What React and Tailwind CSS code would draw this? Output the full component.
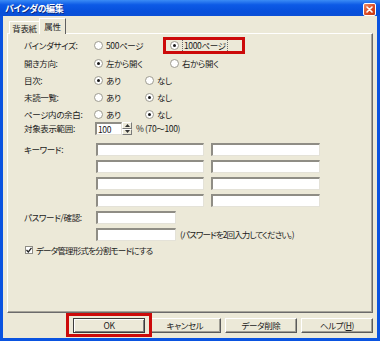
import React from 'react';

const Radio = ({ checked }) => (
  <span className="relative inline-block w-[9px] h-[9px] rounded-full border border-[#9d9b90] bg-white shrink-0">
    {checked && <span className="absolute left-[2px] top-[2px] w-[3px] h-[3px] rounded-full bg-[#1a1a1a]" />}
  </span>
);

const Option = ({ checked, w, children }) => (
  <div className={`flex items-center gap-[3px] ${w}`}>
    <Radio checked={checked} />
    <span>{children}</span>
  </div>
);

const Field = ({ w, children }) => (
  <div className={`h-[13px] bg-white border-t-2 border-l-2 border-r border-b border-t-[#8f8d85] border-l-[#8f8d85] border-r-[#e4e2d8] border-b-[#e4e2d8] flex items-center pl-[1px] ${w}`}>
    {children}
  </div>
);

const RadioRow = ({ label, h, w, a, b, sel }) => (
  <div className={`flex items-center ${h}`}>
    <span className="w-[70px] shrink-0">{label}</span>
    <Option checked={sel === 0} w={w}>{a}</Option>
    <Option checked={sel === 1} w="">{b}</Option>
  </div>
);

const Btn = ({ children, def }) => (
  <div
    className={`w-[72px] h-[15px] flex items-center justify-center bg-[#ece9d8] border ${
      def
        ? 'border-[#3c3c3c] shadow-[inset_1px_1px_0_#ffffff,inset_-1px_-1px_0_#808080]'
        : 'border-t-white border-l-white border-r-[#5a5a5a] border-b-[#5a5a5a] shadow-[inset_-1px_-1px_0_#a09e94]'
    }`}
  >
    {children}
  </div>
);

export default function App() {
  return (
    <div className="relative w-[380px] h-[341px] bg-[#0a53e0] px-[3px] pb-[3px] flex flex-col text-[8.5px] tracking-[-0.35px] leading-none text-[#1b1b1b] font-['Noto_Sans_CJK_JP',sans-serif] [font-feature-settings:'palt'] overflow-hidden">
      {/* title bar */}
      <div className="h-[16px] -mx-[3px] px-[5px] flex items-center justify-between bg-[linear-gradient(#3b8cf5,#0d5ae6_30%,#0750dc_70%,#0a4fd6)]">
        <span className="text-white font-bold text-[9px] [text-shadow:1px_1px_0_#0a2a80]">バインダの編集</span>
        <div className="w-[13px] h-[13px] mt-[3px] mr-[-1px] rounded-[2px] border border-white bg-[linear-gradient(135deg,#ee8c66,#d9451e_60%,#c53a12)] flex items-center justify-center">
          <svg width="7" height="7" viewBox="0 0 7 7">
            <path d="M1 1L6 6M6 1L1 6" stroke="white" strokeWidth="1.6" strokeLinecap="round" />
          </svg>
        </div>
      </div>

      {/* body */}
      <div className="flex-1 bg-[#ece9d8] flex flex-col px-[4px]">
        {/* tabs */}
        <div className="h-[17px] flex items-end pl-[2px] relative z-10">
          <div className="h-[13px] w-[30px] mb-[-1px] flex items-center justify-center border-t border-l border-white bg-[#ece9d8]">
            背表紙
          </div>
          <div className="h-[16px] w-[27px] mb-[-1px] flex items-center justify-center border-t border-l border-white border-r border-r-[#5f5f5f] bg-[#ece9d8]">
            属性
          </div>
        </div>

        {/* tab panel */}
        <div className="h-[280px] border-t border-l border-t-white border-l-white border-r border-b border-r-[#6b6b6b] border-b-[#6b6b6b] shadow-[inset_-1px_-1px_0_#a6a49a] pl-[16px] pt-[3px]">
          <RadioRow label="バインダサイズ:" h="h-[17px]" w="w-[76px]" a="500ページ" sel={1}
            b={<span className="border border-dotted border-[#6a6a6a] px-[1px] py-[1px]">1000ページ</span>} />
          <RadioRow label="開き方向:" h="h-[18px]" w="w-[76px]" a="左から開く" b="右から開く" sel={0} />
          <RadioRow label="目次:" h="h-[17px]" w="w-[51px]" a="あり" b="なし" sel={0} />
          <RadioRow label="未読一覧:" h="h-[17px]" w="w-[51px]" a="あり" b="なし" sel={1} />
          <RadioRow label="ページ内の余白:" h="h-[16px]" w="w-[51px]" a="あり" b="なし" sel={1} />

          <div className="flex items-center h-[13px]">
            <span className="w-[71px] shrink-0">対象表示範囲:</span>
            <Field w="w-[27px]">100</Field>
            <div className="w-[10px] h-[13px] flex flex-col">
              <div className="flex-1 bg-[#ece9d8] border border-t-white border-l-white border-r-[#7a7a7a] border-b-[#7a7a7a] flex items-center justify-center">
                <svg width="5" height="3" viewBox="0 0 5 3"><path d="M0 3L2.5 0L5 3Z" fill="#333" /></svg>
              </div>
              <div className="flex-1 bg-[#ece9d8] border border-t-white border-l-white border-r-[#7a7a7a] border-b-[#7a7a7a] flex items-center justify-center">
                <svg width="5" height="3" viewBox="0 0 5 3"><path d="M0 0L2.5 3L5 0Z" fill="#333" /></svg>
              </div>
            </div>
            <span className="ml-[4px]">% (70～100)</span>
          </div>

          <div className="mt-[8px] flex flex-col gap-[4px]">
            {[0, 1, 2, 3].map((i) => (
              <div key={i} className="flex items-center">
                <span className="w-[72px] shrink-0">{i === 0 ? 'キーワード:' : ''}</span>
                <Field w="w-[108px]" />
                <div className="w-[7px]" />
                <Field w="w-[109px]" />
              </div>
            ))}
            <div className="flex items-center">
              <span className="w-[72px] shrink-0">パスワード/確認:</span>
              <Field w="w-[80px]" />
            </div>
            <div className="flex items-center">
              <span className="w-[72px] shrink-0" />
              <Field w="w-[80px]" />
              <span className="ml-[4px] tracking-[-0.9px]">(パスワードを2回入力してください。)</span>
            </div>
          </div>

          <div className="mt-[4px] flex items-center h-[10px] pl-[1px] gap-[3px]">
            <span className="w-[8px] h-[8px] bg-white border border-[#8f8d85] flex items-center justify-center">
              <svg width="6" height="6" viewBox="0 0 6 6"><path d="M0.5 3L2.3 5L5.5 0.8" stroke="#222" strokeWidth="1.3" fill="none" /></svg>
            </span>
            <span className="tracking-[-0.8px]">データ管理形式を分割モードにする</span>
          </div>
        </div>

        {/* buttons */}
        <div className="mt-[5px] flex justify-end gap-[4px]">
          <Btn def>OK</Btn>
          <Btn>キャンセル</Btn>
          <Btn>データ削除</Btn>
          <Btn>ヘルプ(<span className="underline">H</span>)</Btn>
        </div>
      </div>

      {/* annotation boxes */}
      <div className="absolute left-[163px] top-[37px] w-[82px] h-[17px] border-[3px] border-[#cc0a0a]" />
      <div className="absolute left-[66px] top-[313px] w-[86px] h-[24px] border-[3px] border-[#cc0a0a]" />
    </div>
  );
}
